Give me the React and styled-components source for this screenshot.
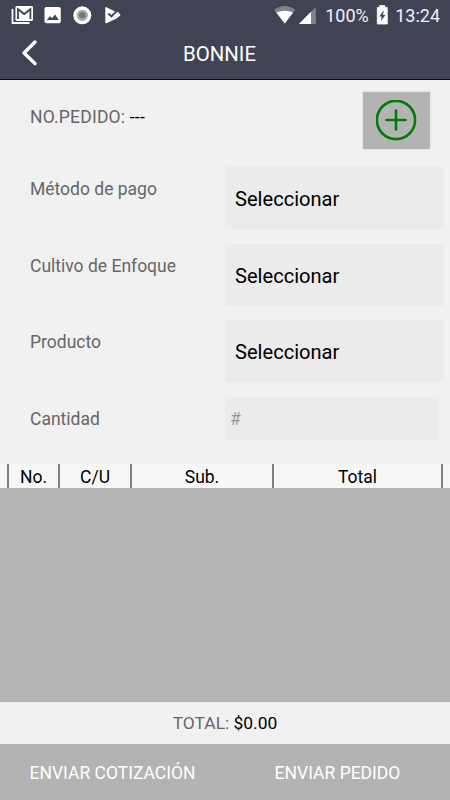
import React from 'react';
import styled, { createGlobalStyle } from 'styled-components';

const GlobalStyle = createGlobalStyle`
  * { box-sizing: border-box; }
  body { margin: 0; background: #f1f1f1; }
  button, input { font: inherit; border: 0; border-radius: 0; padding: 0; margin: 0; }
`;

const Screen = styled.div`
  display: flex;
  flex-direction: column;
  width: 450px;
  height: 800px;
  overflow: hidden;
  background: #f1f1f1;
  color: #666;
  font-family: Roboto, 'Liberation Sans', sans-serif;
  font-size: 17.5px;
  line-height: 20px;
`;

const Header = styled.header`
  flex: none;
  height: 80px;
  background: #3f4354;
  border-bottom: 1px solid #0a0b26;
  color: #fff;
`;

const StatusBar = styled.div`
  display: flex;
  justify-content: space-between;
  height: 31px;
  padding: 0 10px 0 11px;
`;

const StatusIcons = styled.svg`
  display: block;
  width: ${(p) => p.$width}px;
  height: 31px;
`;

const StatusInfo = styled.div`
  display: flex;
  font-size: 18px;
  line-height: 32px;
  color: #f0f1f5;
`;

const Percent = styled.span`
  width: 51px;
`;

const TitleBar = styled.div`
  display: grid;
  grid-template-columns: 60px 1fr 71px;
  height: 44px;
`;

const BackButton = styled.button`
  background: none;
  color: #fff;
  svg { display: block; }
`;

const Title = styled.h1`
  margin: 0;
  text-align: center;
  font-size: 20.4px;
  font-weight: 400;
  line-height: 46px;
`;

const Form = styled.main`
  flex: none;
  height: 384px;
  padding-top: 12px;
`;

const Row = styled.div`
  display: grid;
  grid-template-columns: 225px 1fr;
  align-items: start;
  height: ${(p) => p.$height}px;
`;

const Label = styled.label`
  padding: ${(p) => p.$top}px 0 0 30px;
`;

const OrderNumber = styled(Label)`
  letter-spacing: 0.2px;
`;

const Strong = styled.span`
  color: #000;
`;

const AddButton = styled.button`
  display: flex;
  align-items: center;
  justify-content: center;
  justify-self: end;
  width: 67px;
  height: 57px;
  margin-right: 20px;
  background: #b4b4b4;
  box-shadow: 0 0 2px #d0d0d0;
`;

const Select = styled.button`
  width: 219px;
  height: 62px;
  padding: 2px 0 0 10px;
  background: #ebebeb;
  color: #000;
  font-size: 20.1px;
  text-align: left;
`;

const Quantity = styled.input`
  width: 214px;
  height: 43px;
  padding: 1px 0 0 5px;
  background: #ebebeb;
  outline: 0;
  &::placeholder { color: #999; opacity: 1; }
`;

const TableHead = styled.div`
  display: grid;
  grid-template-columns: 51px 72px 142px 171px;
  flex: none;
  height: 24px;
  padding-left: 7px;
  background: #f7f7f7;
`;

const HeadCell = styled.div`
  border-left: 2px solid #808080;
  border-right: ${(p) => (p.$last ? '2px solid #808080' : '0')};
  color: #000;
  line-height: 27px;
  text-align: center;
`;

const TableBody = styled.div`
  flex: 1;
  background: #b6b6b6;
`;

const TotalBar = styled.div`
  flex: none;
  height: 42px;
  line-height: 43px;
  text-align: center;
  font-size: 17.4px;
`;

const Footer = styled.footer`
  display: grid;
  grid-template-columns: 1fr 1fr;
  flex: none;
  height: 56px;
`;

const FooterButton = styled.button`
  background: #b3b3b3;
  color: #fff;
  padding-top: 2px;
`;

const fields = ['Método de pago', 'Cultivo de Enfoque', 'Producto'];

function NotificationIcons() {
  return (
    <StatusIcons $width={112} viewBox="11 0 112 31" aria-hidden="true">
      <path d="M12.5 9V23H29.5" fill="none" stroke="#fff" strokeWidth="1.8" />
      <rect x="15.4" y="6" width="17.6" height="15" rx="1.4" fill="#fff" />
      <path d="M18 19V9.2L24.2 14L30.4 9.2V19" fill="none" stroke="#3f4354" strokeWidth="1.8" />
      <rect x="44.5" y="7" width="16.3" height="16.3" rx="1.8" fill="#fff" />
      <path d="M46.8 20L50 16L52 18.3L55 14.5L58.8 20Z" fill="#3f4354" />
      <circle cx="82.3" cy="15.3" r="9" fill="#fff" />
      <circle cx="82.3" cy="15.3" r="5.6" fill="#aaa" />
      <circle cx="82.3" cy="15.3" r="3.3" fill="#777780" />
      <path d="M106 7.1L113 10.5L115.9 12.1L118 11.8L120.7 15L117 18.3L106.5 23.3Q105.3 23.5 105.3 22.3V7.5Z" fill="#fff" />
      <path d="M108.3 13.5L111.4 16.5L118 9.8" fill="none" stroke="#3f4354" strokeWidth="1.8" />
    </StatusIcons>
  );
}

function SignalIcons() {
  return (
    <StatusIcons $width={51} viewBox="275 0 51 31" aria-hidden="true">
      <path d="M275 9.8Q285.7 2.2 296.4 9.8L285.7 23.4Z" fill="#80838f" />
      <path d="M277.3 12.6Q285.7 8.7 294.1 12.6L285.7 23.4Z" fill="#fff" />
      <path d="M300 24L316.8 7V24Z" fill="#80838f" />
      <path d="M300 24L312 11.8V24Z" fill="#fff" />
    </StatusIcons>
  );
}

function BatteryIcon() {
  return (
    <StatusIcons $width={19} viewBox="376.5 0 19 31" aria-hidden="true">
      <path d="M377.8 7.4H380.2V5.6H385.3V7.4H387.8V24H377.8Z" fill="#fff" stroke="#fff" strokeWidth=".8" strokeLinejoin="round" />
      <path d="M384.3 10.2L379.8 16.6H382.3L381.2 21.2L386 14.9H383.5Z" fill="#3f4354" />
    </StatusIcons>
  );
}

export default function App() {
  return (
    <Screen>
      <GlobalStyle />
      <Header>
        <StatusBar>
          <NotificationIcons />
          <StatusInfo>
            <SignalIcons />
            <Percent>100%</Percent>
            <BatteryIcon />
            <span>13:24</span>
          </StatusInfo>
        </StatusBar>
        <TitleBar>
          <BackButton aria-label="Volver">
            <svg width="60" height="44" viewBox="0 31 60 44">
              <path d="M35 41L24 52L35 62.5" fill="none" stroke="currentColor" strokeWidth="3.4" strokeLinecap="round" strokeLinejoin="round" />
            </svg>
          </BackButton>
          <Title>BONNIE</Title>
        </TitleBar>
      </Header>
      <Form>
        <Row $height={75}>
          <OrderNumber as="div" $top={15}>NO.PEDIDO: <Strong>---</Strong></OrderNumber>
          <AddButton aria-label="Agregar">
            <svg width="42" height="42" viewBox="0 0 42 42" fill="none" stroke="#007d05" strokeWidth="2.6" strokeLinecap="round">
              <circle cx="20" cy="20" r="19.1" />
              <path d="M20 10.5V29.5M10.5 20H29.5" />
            </svg>
          </AddButton>
        </Row>
        {fields.map((name) => (
          <Row key={name} $height={76.5}>
            <Label as="div" $top={12}>{name}</Label>
            <Select>Seleccionar</Select>
          </Row>
        ))}
        <Row $height={43}>
          <Label htmlFor="cantidad" $top={12}>Cantidad</Label>
          <Quantity id="cantidad" placeholder="#" />
        </Row>
      </Form>
      <TableHead>
        <HeadCell>No.</HeadCell>
        <HeadCell>C/U</HeadCell>
        <HeadCell>Sub.</HeadCell>
        <HeadCell $last>Total</HeadCell>
      </TableHead>
      <TableBody />
      <TotalBar>TOTAL: <Strong>$0.00</Strong></TotalBar>
      <Footer>
        <FooterButton>ENVIAR COTIZACIÓN</FooterButton>
        <FooterButton>ENVIAR PEDIDO</FooterButton>
      </Footer>
    </Screen>
  );
}
